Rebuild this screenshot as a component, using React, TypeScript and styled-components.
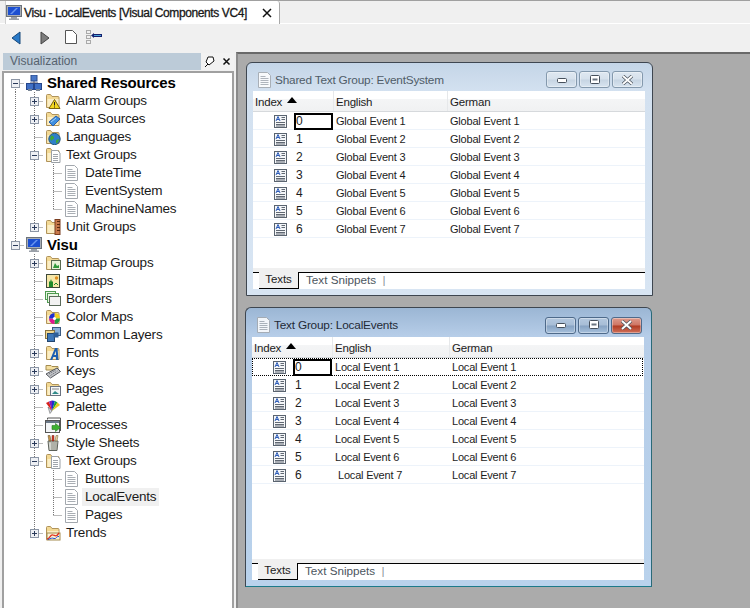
import React from "react";
import styled, { createGlobalStyle, css } from "styled-components";

const Global = createGlobalStyle`
  html, body { margin: 0; padding: 0; background: #f0f0f0; overflow: hidden; }
  * { box-sizing: border-box; }
  #root { width: 750px; height: 608px; }
`;

const Page = styled.div`
  width: 750px; height: 608px; display: flex; flex-direction: column;
  font-family: "Liberation Sans", Arial, sans-serif; color: #111;
`;
const TabStrip = styled.div`
  height: 24px; flex: none; display: flex; padding-left: 5px; align-items: flex-end;
  background: #f0f0f0; border-top: 1px solid #a0a0a0; border-bottom: 1px solid #fff;
`;
const DocTab = styled.div`
  width: 275px; height: 23px; margin-bottom: -1px; background: #fff; display: flex; align-items: center; gap: 2px;
  border-right: 1px solid #a8a8a8; border-left: 1px solid #d0d0d0; border-top-right-radius: 3px;
`;
const DocTabTitle = styled.span`
  font-size: 12px; letter-spacing: -0.4px; -webkit-text-stroke: 0.3px #222; white-space: nowrap; width: 236px;
`;
const TabIcon = styled.span`
  width: 16px; height: 16px; flex: none; display: block;
`;
const Toolbar = styled.div`
  height: 28px; flex: none; display: flex; align-items: center; padding-left: 10px; background: #f0f0f0;
`;
const ToolSlot = styled.span<{ $w: number }>`
  width: ${p => p.$w}px; height: 16px; display: block; flex: none;
`;
const Workspace = styled.div`
  flex: 1; display: flex; min-height: 0;
`;
const Sidebar = styled.aside`
  width: 236px; flex: none; padding-left: 2px; padding-right: 2px; display: flex; flex-direction: column; border-top: 1px solid #f0f0f0;
`;
const PanelHead = styled.div`
  height: 17px; flex: none; display: flex; margin-left: 1px; background: #bccbd8;
`;
const PanelTitle = styled.span`
  flex: 1; padding-left: 7px; font-size: 12px; line-height: 17px; color: #56626e;
`;
const PanelControls = styled.div`
  width: 33px; background: #f2f2f2; display: flex; align-items: center; justify-content: space-between; padding: 0 3px 0 2px;
`;
const TreePane = styled.div`
  flex: 1; background: #fff; border: 1px solid #a0a0a0; border-width: 2px 2px 0 2px; padding: 1px 0 0 1px; margin-top: 1px; min-height: 0;
`;
const TreeRow = styled.div`
  height: 18px; display: flex; align-items: center;
`;
const TreeLabel = styled.span<{ $bold?: boolean; $selected?: boolean }>`
  font-size: ${p => (p.$bold ? 15 : 13.5)}px; letter-spacing: -0.2px; line-height: 18px; padding: 0 3px; white-space: nowrap;
  margin-left: 2px; color: #1a1a1a;
  ${p => p.$bold && css`font-weight: 700; color: #000; margin-bottom: 1px;`}
  ${p => p.$selected && css`background: #f0f0f0;`}
`;
const IconBox = styled.span`
  width: 16px; height: 16px; margin-left: 2px; flex: none; display: block;
`;
const Mdi = styled.main`
  flex: 1; background: #ababab; border-top: 2px solid #696969; border-left: 2px solid #8a8a8a;
  padding: 8px 0 0 7px; display: flex; flex-direction: column; gap: 11px; min-width: 0;
`;
const Win = styled.section<{ $active?: boolean; $h: number; $shift: number }>`
  width: 407px; height: ${p => p.$h}px; flex: none; margin-left: ${p => p.$shift}px; display: flex; flex-direction: column;
  padding: 0 7px 6px 6px; border: 1px solid #3e4650; border-top-left-radius: 6px; border-top-right-radius: 6px;
  ${p => p.$active
    ? css`background: linear-gradient(#9bb6d4 0, #b6cde8 28px, #b9d2ec 100%); border-right-color: #2a6a78; border-bottom-color: #1c7a8a;`
    : css`background: linear-gradient(#c4d5e7 0, #d3e1f0 28px, #d8e5f3 100%);`}
`;
const TitleBar = styled.header<{ $active?: boolean }>`
  height: ${p => (p.$active ? 29 : 28)}px; flex: none; display: flex; align-items: center; padding: 5px 2px 0 4px;
  gap: 2px; font-size: 11.8px; letter-spacing: -0.2px; color: ${p => (p.$active ? "#1f2a36" : "#4f5c68")};
`;
const TitleIcon = styled.span`
  width: 16px; height: 16px; flex: none; display: block; opacity: 0.85;
`;
const TitleText = styled.span`
  flex: 1; white-space: nowrap;
`;
const WinButtons = styled.div`
  display: flex; gap: 2px;
`;
const WinButton = styled.span<{ $active?: boolean; $close?: boolean }>`
  width: 31px; height: 17px; border-radius: 3px; display: flex; align-items: center; justify-content: center;
  border: 1px solid ${p => (p.$active ? "#4e6a8a" : "#8499ad")};
  box-shadow: inset 0 0 0 1px rgba(255,255,255,0.35);
  background: ${p => p.$close
    ? "linear-gradient(#dd9a8c 0, #cf7564 48%, #b03a22 52%, #d0705a 100%)"
    : p.$active
      ? "linear-gradient(#b4c8df 0, #a7bdd6 48%, #86a2c2 52%, #a6c0dc 100%)"
      : "linear-gradient(#dfe8f1 0, #d6e1ec 48%, #c6d4e2 52%, #d8e4f0 100%)"};
`;
const Client = styled.div`
  flex: 1; background: #fff; display: flex; flex-direction: column; min-height: 0;
`;
const columns = css<{ $first: number; $second: number }>`
  display: grid; grid-template-columns: ${p => p.$first}px ${p => p.$second}px 1fr;
`;
const GridHead = styled.div<{ $first: number; $second: number; $h: number }>`
  ${columns}
  height: ${p => p.$h}px; flex: none; font-size: 11.5px; letter-spacing: -0.2px; color: #1c1c1c;
  background: linear-gradient(#fff 0, #fff 40%, #f4f5f6 41%, #f0f1f2 100%); border-bottom: 1px solid #d6d9dc;
`;
const HeadCell = styled.div`
  display: flex; align-items: flex-end; gap: 5px; padding: 0 0 3px 2px; border-left: 1px solid #e6e8ea;
  &:first-child { border-left: 0; padding-left: 2px; }
`;
const SortMark = styled.svg`
  width: 10px; height: 6px; margin-bottom: 5px;
`;
const GridBody = styled.div`
  flex: 1; min-height: 0; font-size: 11px; letter-spacing: -0.2px; color: #1c1c1c;
`;
const GridRow = styled.div<{ $first: number; $second: number; $focus?: boolean }>`
  ${columns}
  height: 18px; align-items: center; border-bottom: 1px solid #edf3fa;
  ${p => p.$focus && css`outline: 1px dotted #000; outline-offset: -1px; border-bottom-color: transparent; margin-right: 1px;`}
`;
const IndexCell = styled.div`
  display: flex; align-items: center; height: 18px; padding-left: 21px; font-size: 12px;
`;
const RowGlyph = styled.span`
  width: 13px; height: 13px; display: block; flex: none; margin-right: 7px;
`;
const IndexValue = styled.span<{ $editing?: boolean }>`
  flex: 1; padding-left: 2px; line-height: 14px; height: 17px; display: flex; align-items: center;
  ${p => p.$editing && css`border: 2px solid #000; padding-left: 0;`}
`;
const TextCell = styled.div<{ $nudge?: boolean }>`
  padding-left: ${p => (p.$nudge ? 6 : 3)}px; white-space: nowrap;
`;
const BottomTabs = styled.footer`
  height: 21px; flex: none; display: flex; align-items: flex-start; padding-top: 4px; background: linear-gradient(#f0f0f0 0, #f0f0f0 4px, #fff 4px);
`;
const Stub = styled.span`
  width: 6px; height: 17px; flex: none; border-top: 1px solid #000;
`;
const ActiveTab = styled.span`
  width: 40px; height: 17px; flex: none; background: #f0f0f0; border-right: 1px solid #000; border-bottom: 1px solid #000;
  font-size: 11.5px; letter-spacing: -0.1px; line-height: 15px; text-align: center; color: #222;
`;
const Rest = styled.span`
  flex: 1; height: 17px; border-top: 1px solid #000; background: #fff; font-size: 11.7px; line-height: 14px; padding-left: 7px; color: #4c5660;
`;
const TabDivider = styled.span`
  margin-left: 3px; color: #8a9098;
`;

/* ---------- drawings ---------- */
const Folder = ({ children }: { children?: React.ReactNode }) => (
  <svg viewBox="0 0 16 16" width="16" height="16">
    <path d="M1.500 14.500V2.500q0-1 1-1h3l1.500 2h6q1 0 1 1v10z" fill="#f3d994" stroke="#b0935a" />
    <path d="M2.500 14V6h11v8z" fill="#fbeec6" />
    {children}
  </svg>
);
const Doc = () => (
  <svg viewBox="0 0 16 16" width="16" height="16">
    <path d="M1.500.5h9l3 3v12h-12z" fill="#fff" stroke="#a3a8ae" />
    <path d="M3.500 4.500h5M3.500 6.500h8M3.500 8.500h8M3.500 10.500h8M3.500 12.500h8" stroke="#a9aeb4" />
  </svg>
);
const icons: Record<string, React.ReactNode> = {
  network: (
    <svg viewBox="0 0 16 16" width="16" height="16">
      <path d="M8 4v5M4 10V8h8v2" stroke="#556" fill="none" />
      <rect x="5" y="0" width="6" height="6" fill="#4a78c8" stroke="#2a4a8a" />
      <rect x="0.500" y="8.500" width="7" height="6" fill="#3f6fc4" stroke="#26468a" />
      <rect x="8.500" y="8.500" width="7" height="6" fill="#3f6fc4" stroke="#26468a" />
      <rect x="2" y="14" width="4" height="2" fill="#7a8696" />
      <rect x="10" y="14" width="4" height="2" fill="#7a8696" />
    </svg>
  ),
  monitor: (
    <svg viewBox="0 0 16 16" width="16" height="16">
      <rect x="0.500" y="0.500" width="15" height="11" fill="#a8aeb6" stroke="#6c727a" />
      <rect x="2" y="2" width="12" height="8" fill="#1c4fd0" />
      <path d="M4 9l6-6h2L6 9z" fill="#6a96f0" />
      <path d="M5 12h6v1.500h2V15H3v-1.500h2z" fill="#9aa0a8" />
    </svg>
  ),
  alarm: <Folder><path d="M9.500 6.500l5.500 9H4z" fill="#f6d820" stroke="#7a6410" /><path d="M9.500 9v3.500M9.500 13.500v1" stroke="#222" /></Folder>,
  data: <Folder><path d="M4 11l7-6 4 3-7 7z" fill="#3f8fe0" stroke="#2a5ea8" /><path d="M6 11l5-4" stroke="#a8d4f8" /></Folder>,
  globe: <Folder><circle cx="9.500" cy="10" r="5.700" fill="#2f7fc8" stroke="#245a80" /><path d="M6 6.500c2 0 3 1 3 2.500s-2 1-2.500 3L5 10zM11 11l3-1c0 2-1 4-3 4.500z" fill="#3ea83a" /></Folder>,
  textGroup: <Folder><path d="M6.500 3.500h6l2.500 2.500v9.500H6.500z" fill="#fff" stroke="#9aa0a6" /><path d="M8 7.500h5M8 9.500h5M8 11.500h5M8 13.500h5" stroke="#a0a5ab" /></Folder>,
  unit: <Folder><rect x="10" y="0.500" width="5" height="15" fill="#c8784a" stroke="#7a3e20" /><path d="M12 2.500h3M12 5.500h3M12 8.500h3M12 11.500h3" stroke="#5a2a10" /></Folder>,
  bitmapGroup: <Folder><rect x="6.500" y="5.500" width="9" height="9" fill="#e8f2d8" stroke="#5a6a50" /><path d="M8 13l2-5 2 3 2-1v3z" fill="#2f9a3a" /></Folder>,
  bitmap: (
    <svg viewBox="0 0 16 16" width="16" height="16">
      <rect x="1.500" y="1.500" width="13" height="13" fill="#f6e7a8" stroke="#3f4a3a" />
      <path d="M4 14V8l1 1 1-3 1 3 1-1v6z" fill="#1f8a2a" />
      <circle cx="11.500" cy="5" r="1.700" fill="#e09020" />
      <path d="M9 12l2-2 2 2" stroke="#1f8a2a" fill="none" />
    </svg>
  ),
  borders: (
    <svg viewBox="0 0 16 16" width="16" height="16">
      <rect x="0.500" y="0.500" width="10" height="8" fill="#eaf6e4" stroke="#4e9a50" />
      <rect x="2.500" y="2.500" width="11" height="9" fill="#eaf6e4" stroke="#4e9a50" />
      <rect x="4.500" y="5.500" width="11" height="9" fill="#f2f2f2" stroke="#5a6a5a" />
    </svg>
  ),
  colorMaps: (
    <Folder>
      <path d="M9.500 9.500L9.500 4A5.500 5.500 0 0 1 15 9.500z" fill="#f0d020" />
      <path d="M9.500 9.500L15 9.500A5.500 5.500 0 0 1 9.500 15z" fill="#20a040" />
      <path d="M9.500 9.500L9.500 15A5.500 5.500 0 0 1 4 9.500z" fill="#e01890" />
      <path d="M9.500 9.500L4 9.500A5.500 5.500 0 0 1 9.500 4z" fill="#2030d0" />
      <circle cx="9.500" cy="9.500" r="1.600" fill="#fff" />
    </Folder>
  ),
  layers: (
    <svg viewBox="0 0 16 16" width="16" height="16">
      <rect x="7.500" y="0.500" width="8" height="8" fill="#8ab0d8" stroke="#3a5a80" />
      <rect x="0.500" y="3.500" width="9" height="8" fill="#f2d890" stroke="#8a7440" />
      <rect x="2.500" y="6.500" width="7" height="8" fill="#3f78b8" stroke="#24466e" />
      <rect x="8.500" y="5.500" width="5" height="5" fill="#2f5f98" />
    </svg>
  ),
  fonts: <Folder><path d="M5 15L10 3h2.500l1 12h-2.500l-.2-3H8.400l-1.200 3zM9.200 10H11l-.2-4z" fill="#1c5fb0" /></Folder>,
  keys: (
    <svg viewBox="0 0 16 16" width="16" height="16">
      <path d="M1 5V2.500h5l1 1h6V7H1z" fill="#f4dfa0" stroke="#a48c50" />
      <path d="M1 11l11-6 3.500 3.500-10 6.500z" fill="#c4c6ca" stroke="#55585e" />
      <path d="M4 11l7-4M5.500 12.500l7-4.500" stroke="#6c7078" strokeDasharray="1.500 1" />
    </svg>
  ),
  pages: <Folder><rect x="5.500" y="5.500" width="10" height="9" fill="#f4f6f8" stroke="#6a7280" /><path d="M7 8h7" stroke="#888" /><path d="M7 13l3-3 4 3z" fill="#2f8a8a" /></Folder>,
  palette: (
    <svg viewBox="0 0 16 16" width="16" height="16">
      <path d="M7 12L1 4l3-1.500z" fill="#d8221c" />
      <path d="M7 12L4 2.500 7 1.500z" fill="#7a1fc0" />
      <path d="M7 12V1.500L10 2z" fill="#1c30d0" />
      <path d="M7 12l3-10 2.500 1.500z" fill="#1fa03a" />
      <path d="M7 12l5.500-8.500L15 6z" fill="#e8c820" />
      <path d="M7 12L3 8l2 6.500z" fill="#d0d4dc" stroke="#555" strokeWidth="0.500" />
    </svg>
  ),
  processes: (
    <svg viewBox="0 0 16 16" width="16" height="16">
      <path d="M2.500 2.500v-1.500h13v13" fill="none" stroke="#555" />
      <rect x="0.500" y="3.500" width="14" height="12" fill="#f2f4f6" stroke="#555" />
      <rect x="1" y="4" width="13" height="2" fill="#6a7888" />
      <path d="M7 8.500h3.500V6.500L15.500 10.500l-5 4v-2H7z" fill="#3cb030" stroke="#2a7a20" strokeWidth="0.600" />
    </svg>
  ),
  style: (
    <svg viewBox="0 0 16 16" width="16" height="16">
      <path d="M3 6h10l-1 9.500H4z" fill="#d4d6d0" stroke="#5c6058" />
      <path d="M5 6V7.500M7 7v8M9 7v8M11 7v8" stroke="#8a8c80" />
      <path d="M4 6L3 0.500h2L6 6z" fill="#c89c50" stroke="#5a4520" strokeWidth="0.500" />
      <path d="M7 6V0.500h2V6z" fill="#d83a28" stroke="#6a2010" strokeWidth="0.500" />
      <path d="M10 6l1-5.500h2L12 6z" fill="#e8d0a0" stroke="#6a5a30" strokeWidth="0.500" />
    </svg>
  ),
  trends: (
    <Folder>
      <rect x="2" y="8" width="13" height="7" fill="#fbf3d6" stroke="#a48c50" />
      <path d="M2 14c3 0 3-5 6-4s3 2 6-2" fill="none" stroke="#e0301c" strokeWidth="1.300" />
      <path d="M3 14.500c3-1 4-2 6-1s3-3 5-2" fill="none" stroke="#2050d0" />
    </Folder>
  ),
  doc: <Doc />,
};

const ConnectorSvg = styled.svg`
  flex: none; display: block;
`;
const Connector = ({ kind, box }: { kind: "none" | "pipe" | "tee" | "ell" | "down"; box?: "plus" | "minus" }) => (
  <ConnectorSvg width="19" height="18" viewBox="0 0 19 18">
    <g stroke="#777" strokeDasharray="1 1" fill="none">
      {(kind === "pipe" || kind === "tee") && <path d="M10.500 0v18" />}
      {kind === "ell" && <path d="M10.500 0v9.500" />}
      {kind === "down" && <path d="M10.500 9v9" />}
      {kind !== "none" && kind !== "pipe" && <path d="M10.500 9.500H20" />}
    </g>
    {box && (
      <g>
        <rect x="6.500" y="5.500" width="8" height="8" fill="#eef0f4" stroke="#8c96a6" />
        <path d="M8 9.500h5" stroke="#2a3a5a" />
        {box === "plus" && <path d="M10.500 7v5" stroke="#2a3a5a" />}
      </g>
    )}
  </ConnectorSvg>
);

type Node = { label: string; icon: string; guides: ("none" | "pipe" | "tee" | "ell" | "down")[]; box?: "plus" | "minus"; bold?: boolean; selected?: boolean };
const nodes: Node[] = [
  { label: "Shared Resources", icon: "network", guides: ["down"], box: "minus", bold: true },
  { label: "Alarm Groups", icon: "alarm", guides: ["pipe", "tee"], box: "plus" },
  { label: "Data Sources", icon: "data", guides: ["pipe", "tee"], box: "plus" },
  { label: "Languages", icon: "globe", guides: ["pipe", "tee"] },
  { label: "Text Groups", icon: "textGroup", guides: ["pipe", "tee"], box: "minus" },
  { label: "DateTime", icon: "doc", guides: ["pipe", "pipe", "tee"] },
  { label: "EventSystem", icon: "doc", guides: ["pipe", "pipe", "tee"] },
  { label: "MachineNames", icon: "doc", guides: ["pipe", "pipe", "ell"] },
  { label: "Unit Groups", icon: "unit", guides: ["pipe", "ell"], box: "plus" },
  { label: "Visu", icon: "monitor", guides: ["ell"], box: "minus", bold: true },
  { label: "Bitmap Groups", icon: "bitmapGroup", guides: ["none", "tee"], box: "plus" },
  { label: "Bitmaps", icon: "bitmap", guides: ["none", "tee"] },
  { label: "Borders", icon: "borders", guides: ["none", "tee"] },
  { label: "Color Maps", icon: "colorMaps", guides: ["none", "tee"] },
  { label: "Common Layers", icon: "layers", guides: ["none", "tee"] },
  { label: "Fonts", icon: "fonts", guides: ["none", "tee"], box: "plus" },
  { label: "Keys", icon: "keys", guides: ["none", "tee"], box: "plus" },
  { label: "Pages", icon: "pages", guides: ["none", "tee"], box: "plus" },
  { label: "Palette", icon: "palette", guides: ["none", "tee"] },
  { label: "Processes", icon: "processes", guides: ["none", "tee"] },
  { label: "Style Sheets", icon: "style", guides: ["none", "tee"], box: "plus" },
  { label: "Text Groups", icon: "textGroup", guides: ["none", "tee"], box: "minus" },
  { label: "Buttons", icon: "doc", guides: ["none", "pipe", "tee"] },
  { label: "LocalEvents", icon: "doc", guides: ["none", "pipe", "tee"], selected: true },
  { label: "Pages", icon: "doc", guides: ["none", "pipe", "ell"] },
  { label: "Trends", icon: "trends", guides: ["none", "ell"], box: "plus" },
];

const SheetGlyph = () => (
  <svg viewBox="0 0 13 13" width="13" height="13">
    <rect x="0.500" y="0.500" width="12" height="12" fill="#f4f6f8" stroke="#5a6470" />
    <path d="M2 6l2-4.500L6 6M3 4.500h2" fill="none" stroke="#2a5ab8" />
    <path d="M7.500 2.500H11M7.500 4.500H11M2 7.500h9M2 9.500h9M2 11h9" stroke="#3a4450" strokeWidth="0.800" />
  </svg>
);
const GlyphMin = () => (
  <svg width="12" height="8" viewBox="0 0 12 8"><rect x="1.500" y="2.500" width="9" height="4" rx="1" fill="#fff" stroke="#46505c" /></svg>
);
const GlyphMax = () => (
  <svg width="12" height="10" viewBox="0 0 12 10"><rect x="1.500" y="0.500" width="9" height="8" rx="1" fill="#fff" stroke="#46505c" /><rect x="3.500" y="3.500" width="5" height="2" fill="#6a7480" /></svg>
);
const GlyphClose = () => (
  <svg width="13" height="10" viewBox="0 0 13 10"><path d="M2 1l9 8M11 1L2 9" stroke="#4e5660" strokeWidth="3.400" /><path d="M2 1l9 8M11 1L2 9" stroke="#fff" strokeWidth="1.800" /></svg>
);

const GroupWindow = ({ title, rows, active, h, shift, first, second, head }: {
  title: string; rows: string[][]; active?: boolean; h: number; shift: number; first: number; second: number; head: number;
}) => (
  <Win $active={active} $h={h} $shift={shift}>
    <TitleBar $active={active}>
      <TitleIcon><Doc /></TitleIcon>
      <TitleText>{title}</TitleText>
      <WinButtons>
        <WinButton $active={active}><GlyphMin /></WinButton>
        <WinButton $active={active}><GlyphMax /></WinButton>
        <WinButton $active={active} $close={active}><GlyphClose /></WinButton>
      </WinButtons>
    </TitleBar>
    <Client>
      <GridHead $first={first} $second={second} $h={head}>
        <HeadCell>Index<SortMark viewBox="0 0 10 6"><path d="M5 0l5 6H0z" fill="#000" /></SortMark></HeadCell>
        <HeadCell>English</HeadCell>
        <HeadCell>German</HeadCell>
      </GridHead>
      <GridBody>
        {rows.map((r, i) => (
          <GridRow key={i} $first={first} $second={second} $focus={active && i === 0}>
            <IndexCell>
              <RowGlyph><SheetGlyph /></RowGlyph>
              <IndexValue $editing={i === 0}>{i}</IndexValue>
            </IndexCell>
            <TextCell $nudge={active && i === 6}>{r[0]}</TextCell>
            <TextCell>{r[1]}</TextCell>
          </GridRow>
        ))}
      </GridBody>
      <BottomTabs>
        <Stub />
        <ActiveTab>Texts</ActiveTab>
        <Rest>Text Snippets <TabDivider>|</TabDivider></Rest>
      </BottomTabs>
    </Client>
  </Win>
);

const makeRows = (p: string) => [1, 2, 3, 4, 5, 6, 7].map(n => [`${p} Event ${n}`, `${p} Event ${n}`]);

export default function App() {
  return (
    <Page>
      <Global />
      <TabStrip>
        <DocTab>
          <TabIcon>{icons.monitor}</TabIcon>
          <DocTabTitle>Visu - LocalEvents [Visual Components VC4]</DocTabTitle>
          <svg width="10" height="10" viewBox="0 0 10 10"><path d="M1 1l8 8M9 1l-8 8" stroke="#111" strokeWidth="1.500" /></svg>
        </DocTab>
      </TabStrip>
      <Toolbar>
        <ToolSlot $w={29}>
          <svg width="11" height="16" viewBox="0 0 11 16"><path d="M10 2v12L2 8z" fill="#2a7ac8" stroke="#16487a" /></svg>
        </ToolSlot>
        <ToolSlot $w={26}>
          <svg width="11" height="16" viewBox="0 0 11 16"><path d="M2 2v12l8-6z" fill="#7c7c7c" stroke="#444" /></svg>
        </ToolSlot>
        <ToolSlot $w={21}>
          <svg width="12" height="14" viewBox="0 0 12 14"><path d="M.5 3V.5h7l4 4v9H.500z" fill="#fff" stroke="#555" /></svg>
        </ToolSlot>
        <ToolSlot $w={18}>
          <svg width="16" height="14" viewBox="0 0 16 14">
            <rect x="0.500" y="0.500" width="4" height="3" fill="none" stroke="#aaa" />
            <rect x="0.500" y="5.500" width="4" height="3" fill="none" stroke="#aaa" />
            <rect x="0.500" y="10.500" width="4" height="3" fill="none" stroke="#aaa" />
            <path d="M5 5.500l3-2.500v5z" fill="#14206e" />
            <rect x="8" y="4.500" width="7.500" height="2" fill="#4aa0d8" stroke="#14206e" />
          </svg>
        </ToolSlot>
      </Toolbar>
      <Workspace>
        <Sidebar>
          <PanelHead>
            <PanelTitle>Visualization</PanelTitle>
            <PanelControls>
              <svg width="12" height="12" viewBox="0 0 12 12"><path d="M5 1h5l1 4-5 4-3-3z" fill="#fff" stroke="#111" /><path d="M2 11l3-3" stroke="#111" /></svg>
              <svg width="9" height="9" viewBox="0 0 9 9"><path d="M1.500 1.500l6 6M7.500 1.500l-6 6" stroke="#111" strokeWidth="1.500" /></svg>
            </PanelControls>
          </PanelHead>
          <TreePane>
            {nodes.map((n, i) => (
              <TreeRow key={i}>
                {n.guides.map((g, j) => (
                  <Connector key={j} kind={g} box={j === n.guides.length - 1 ? n.box : undefined} />
                ))}
                <IconBox>{icons[n.icon]}</IconBox>
                <TreeLabel $bold={n.bold} $selected={n.selected}>{n.label}</TreeLabel>
              </TreeRow>
            ))}
          </TreePane>
        </Sidebar>
        <Mdi>
          <GroupWindow title="Shared Text Group: EventSystem" rows={makeRows("Global")} h={234} shift={1} first={80} second={114} head={21} />
          <GroupWindow title="Text Group: LocalEvents" rows={makeRows("Local")} active h={280} shift={0} first={80} second={117} head={21} />
        </Mdi>
      </Workspace>
    </Page>
  );
}
